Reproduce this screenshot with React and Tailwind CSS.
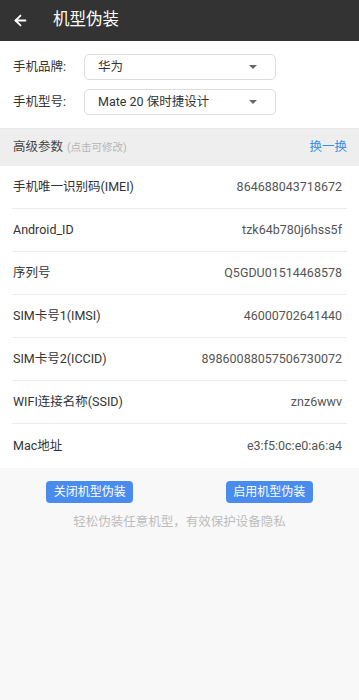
import { ArrowLeft } from "lucide-react";

const PARAMS = [
  ["手机唯一识别码(IMEI)", "864688043718672"],
  ["Android_ID", "tzk64b780j6hss5f"],
  ["序列号", "Q5GDU01514468578"],
  ["SIM卡号1(IMSI)", "46000702641440"],
  ["SIM卡号2(ICCID)", "89860088057506730072"],
  ["WIFI连接名称(SSID)", "znz6wwv"],
  ["Mac地址", "e3:f5:0c:e0:a6:a4"],
];

const FONT = "font-['Roboto','Noto_Sans_CJK_SC',sans-serif]";

// Select-looking box
const Picker = ({ label, value }) => (
  <div className="flex items-center h-[26px]">
    <span className="w-[71px] text-[12.5px] text-[#333]">{label}</span>
    <div className="w-[192px] h-[26px] flex items-center justify-between pl-[13px] pr-[18px] border border-[#dcdcdc] rounded-[5px] text-[12.5px] text-[#333]">
      <span>{value}</span>
      <span className="w-0 h-0 border-l-[4px] border-r-[4px] border-t-[4px] border-l-transparent border-r-transparent border-t-[#666]" />
    </div>
  </div>
);

export default function App() {
  return (
    <div className={`${FONT} w-[359px] min-h-[700px] bg-[#f8f8f8] flex flex-col`}>
      {/* Header */}
      <div className="h-[41px] bg-[#333333] flex items-center px-[12px] gap-[24px] text-white">
        <ArrowLeft className="w-[17px] h-[17px]" strokeWidth={2.5} />
        <span className="text-[16.5px]">机型伪装</span>
      </div>

      {/* Brand / model */}
      <div className="bg-white px-[13px] pt-[13px] pb-[13px] flex flex-col gap-[9px] border-b border-[#e8e8e8]">
        <Picker label="手机品牌:" value="华为" />
        <Picker label="手机型号:" value="Mate 20 保时捷设计" />
      </div>

      {/* Section header */}
      <div className="h-[37px] bg-[#eeeeee] flex items-center justify-between pl-[13px] pr-[12px]">
        <div className="flex items-baseline gap-[4px]">
          <span className="text-[12.5px] text-[#444]">高级参数</span>
          <span className="text-[10.5px] text-[#b5b5b5]">(点击可修改)</span>
        </div>
        <span className="text-[12.5px] text-[#3b8fe0]">换一换</span>
      </div>

      {/* Params */}
      <div className="bg-white px-[12px]">
        {PARAMS.map(([k, v], i) => (
          <div
            key={k}
            className={`flex items-center justify-between pl-[1px] pr-[5px] text-[12.5px] ${i < PARAMS.length - 1 ? "h-[43px] border-b border-[#ececec]" : "h-[44px]"}`}
          >
            <span className="text-[#333]">{k}</span>
            <span className="text-[#555]">{v}</span>
          </div>
        ))}
      </div>

      {/* Actions */}
      <div className="flex pt-[13px]">
        <div className="flex-1 flex justify-center">
          <button className="w-[87px] h-[22px] rounded-[4px] bg-[#4a8cee] text-white text-[12px] leading-none">关闭机型伪装</button>
        </div>
        <div className="flex-1 flex justify-center">
          <button className="w-[87px] h-[22px] rounded-[4px] bg-[#4a8cee] text-white text-[12px] leading-none">启用机型伪装</button>
        </div>
      </div>
      <div className="text-center text-[12.5px] text-[#bdbdbd] mt-[10px]">轻松伪装任意机型，有效保护设备隐私</div>
    </div>
  );
}
